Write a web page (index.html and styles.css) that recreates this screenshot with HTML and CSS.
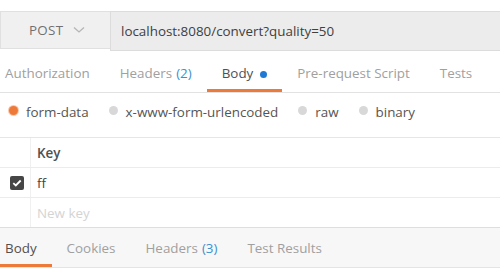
FILE: index.html
```html
<!DOCTYPE html>
<html lang="en">
<head>
    <meta charset="UTF-8">
    <title>Request</title>
    <link rel="stylesheet" href="styles.css">
</head>
<body>
    <div class="request-bar">
        <div class="method">
            <span>POST</span>
            <svg class="chevron" width="12" height="8" viewBox="0 0 12 8"><path d="M1 1.5 L6 6 L11 1.5" fill="none" stroke="#b5b5b5" stroke-width="1.3"/></svg>
        </div>
        <div class="url">localhost:8080/convert?quality=50</div>
    </div>

    <div class="tabs">
        <div class="tab">Authorization</div>
        <div class="tab">Headers <span class="count">(2)</span></div>
        <div class="tab active">Body <span class="dot"></span></div>
        <div class="tab">Pre-request Script</div>
        <div class="tab">Tests</div>
    </div>

    <div class="body-types">
        <label class="radio"><span class="circle on"></span>form-data</label>
        <label class="radio"><span class="circle"></span>x-www-form-urlencoded</label>
        <label class="radio"><span class="circle"></span>raw</label>
        <label class="radio"><span class="circle"></span>binary</label>
    </div>

    <div class="kv-table">
        <div class="row head">
            <div class="check-cell"></div>
            <div class="key-cell">Key</div>
        </div>
        <div class="row">
            <div class="check-cell">
                <span class="checkbox"><svg width="10" height="8" viewBox="0 0 10 8"><path d="M1.3 4.2 L3.8 6.5 L8.7 1.5" fill="none" stroke="#fff" stroke-width="1.8"/></svg></span>
            </div>
            <div class="key-cell">ff</div>
        </div>
        <div class="row">
            <div class="check-cell"></div>
            <div class="key-cell placeholder">New key</div>
        </div>
    </div>

    <div class="tabs response-tabs">
        <div class="tab active">Body</div>
        <div class="tab">Cookies</div>
        <div class="tab">Headers <span class="count">(3)</span></div>
        <div class="tab">Test Results</div>
    </div>
</body>
</html>
```

FILE: styles.css
```css
body {
    margin: 0;
    font-family: "Open Sans", "Liberation Sans", sans-serif;
    font-size: 13.4px;
    color: #505050;
    background: #fff;
    overflow: hidden;
}
.request-bar {
    display: flex;
    margin-top: 11px;
    height: 40px;
}
.method {
    width: 110px;
    height: 38px;
    box-sizing: border-box;
    border: 1px solid #e0e0e0;
    border-right: none;
    background: #f0f0f0;
    display: flex;
    align-items: center;
    padding-left: 28px;
    color: #707070;
    letter-spacing: 0.3px;
}
.chevron {
    margin-left: 10px;
}
.url {
    flex: 1;
    box-sizing: border-box;
    border: 1px solid #dcdcdc;
    border-right: none;
    background: #ececec;
    display: flex;
    align-items: center;
    padding-left: 10px;
    color: #404040;
}
.tabs {
    display: flex;
    height: 41px;
    margin-left: -10px;
    border-bottom: 1px solid #e2e2e2;
    align-items: stretch;
}
.tab {
    padding: 6px 15px 0;
    display: flex;
    align-items: center;
    color: #a0a0a0;
    box-sizing: border-box;
    border-bottom: 3px solid transparent;
    white-space: nowrap;
}
.tab.active {
    color: #505050;
    border-bottom-color: #ee7a3a;
}
.count {
    color: #3d8fd1;
    margin-left: 4px;
}
.dot {
    display: inline-block;
    width: 7px;
    height: 7px;
    border-radius: 50%;
    background: #1f7ad6;
    margin-left: 7px;
    margin-top: 2px;
}
.body-types {
    display: flex;
    align-items: center;
    height: 45px;
    box-sizing: border-box;
    padding: 0 0 6px 9px;
    border-bottom: 1px solid #e6e6e6;
}
.radio {
    display: flex;
    align-items: center;
    margin-right: 20px;
    color: #555;
}
.circle {
    width: 9px;
    height: 9px;
    border-radius: 50%;
    background: #d8d8d8;
    margin-right: 8px;
    margin-top: -4px;
}
.circle.on {
    background: #ee7a3a;
    box-shadow: 0 0 0 1px #f8c9ae;
}
.row {
    display: flex;
    height: 30px;
    border-bottom: 1px solid #ececec;
    box-sizing: border-box;
}
.row:last-child {
    border-bottom-color: #dedede;
}
.check-cell {
    width: 31px;
    border-right: 1px solid #f0f0f0;
    display: flex;
    align-items: center;
    justify-content: center;
    padding-left: 3px;
    box-sizing: border-box;
}
.key-cell {
    flex: 1;
    display: flex;
    align-items: center;
    padding-left: 6px;
    color: #444;
}
.head .key-cell {
    font-weight: 600;
    color: #505050;
}
.placeholder {
    color: #d4d4d4;
}
.checkbox {
    width: 14px;
    height: 14px;
    border-radius: 2px;
    background: #464646;
    display: flex;
    align-items: center;
    justify-content: center;
}
.response-tabs {
    background: #f7f7f7;
    height: 39px;
    border-bottom: 1px solid #e4e4e4;
    padding-left: 10px;
    margin-left: -10px;
}
.response-tabs .tab {
    padding-top: 4px;
}
.response-tabs .tab.active {
    margin-left: -10px;
    padding-left: 15px;
}
```
